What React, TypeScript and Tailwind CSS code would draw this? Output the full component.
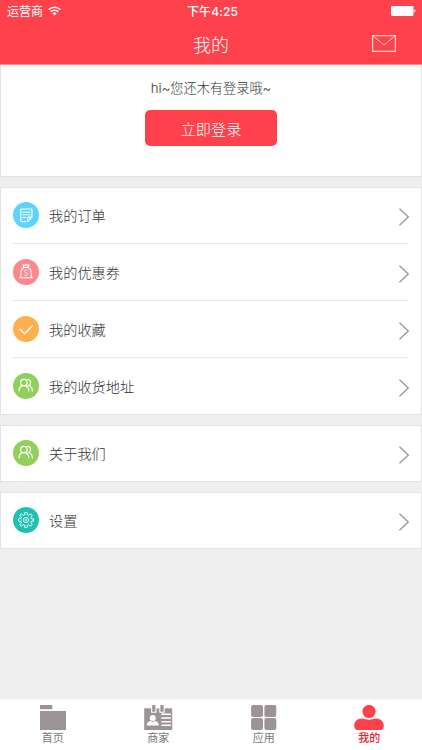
import type { ReactNode } from 'react';

interface MenuItem {
  label: string;
  color: string;
  icon: ReactNode;
}

interface TabItem {
  label: string;
  icon: ReactNode;
  active?: boolean;
}

function OrderIcon() {
  return (
    <svg className="h-[26px] w-[26px]" viewBox="0 0 26 26" fill="none" stroke="white" strokeWidth="1.2" strokeLinejoin="round" strokeLinecap="round">
      <path d="M12.800 19.600H9.400a1.600 1.600 0 0 1-1.600-1.600V8a1 1 0 0 1 1-1H18a1 1 0 0 1 1 1v7.200l-4.400 4.400v-3.400a1 1 0 0 1 1-1H19" />
      <path d="M10 10.200h6.800M10 12.800h6.800M10 15.400h2.600" strokeWidth="1" />
    </svg>
  );
}

function CouponIcon() {
  return (
    <svg className="h-[26px] w-[26px]" viewBox="0 0 26 26" fill="none" stroke="white" strokeWidth="1.1" strokeLinejoin="round" strokeLinecap="round">
      <path d="M10.800 8.400 10 5.700l1.800.5 1.200-.6 1.200.6 1.800-.5-.8 2.700z" />
      <path d="M10.800 8.400C8.700 9.500 8 11 8 13.200v3.600l-1.200 2h12.600l-1.300-2v-3.600c0-2.200-.8-3.700-2.900-4.800" />
      <path d="M14.700 11.900c-.3-.6-.9-.9-1.700-.9-1 0-1.700.5-1.700 1.300 0 2 3.500.8 3.500 2.800 0 .8-.8 1.400-1.800 1.400-.9 0-1.600-.4-1.900-1.100" strokeWidth=".8" />
    </svg>
  );
}

function CheckIcon() {
  return (
    <svg className="h-[26px] w-[26px]" viewBox="0 0 26 26" fill="none" stroke="white" strokeWidth="1.5">
      <path d="m6.600 12.800 5 4.900 8-8.300" />
    </svg>
  );
}

function PeopleIcon() {
  return (
    <svg className="h-[26px] w-[26px]" viewBox="0 0 26 26" fill="none" stroke="white" strokeWidth="1.2" strokeLinecap="round">
      <circle cx="10.9" cy="9.6" r="3.3" />
      <path d="M6 17.800c.2-2.900 1.500-4.600 3.300-5.200M12.600 12.600c1.900.7 3.100 2.400 3.200 5.200" />
      <path d="M14.200 6.500c1.900-.5 3.400 1 3.400 3 0 1.400-.7 2.400-1.700 3 2 .8 3.300 2.600 3.500 5.300" />
    </svg>
  );
}

function GearIcon() {
  return (
    <svg className="h-[26px] w-[26px]" viewBox="0 0 26 26" fill="none" stroke="white" strokeWidth="1" strokeLinejoin="round">
      <path d="M11.600 7.800 11.900 5.500h2.200l.3 2.300 1.300.5 1.900-1.400 1.500 1.500-1.400 1.900.5 1.300 2.300.3v2.200l-2.300.3-.5 1.300 1.400 1.900-1.500 1.500-1.900-1.400-1.300.5-.3 2.300h-2.200l-.3-2.300-1.300-.5-1.900 1.400-1.500-1.500 1.400-1.900-.5-1.300-2.300-.3v-2.200l2.300-.3.5-1.300-1.400-1.900 1.500-1.500 1.900 1.400z" />
      <circle cx="13" cy="13" r="2.700" strokeWidth=".8" />
      <circle cx="13" cy="13" r="1" strokeWidth=".7" />
    </svg>
  );
}

function HomeTabIcon() {
  return (
    <svg className="h-[26px] w-[30px]" viewBox="0 0 30 26" fill="currentColor">
      <path d="M2 0h12.300v4.300H2zM2 6h26v19H2z" />
    </svg>
  );
}

function ShopTabIcon() {
  return (
    <svg className="h-[26px] w-[30px]" viewBox="0 0 30 26">
      <path d="M1.200 3.300h28V25h-28z" fill="currentColor" />
      <path d="M8.100 0h5.400v7.800H8.100zM16.300 0h5.400v7.800h-5.400z" fill="white" />
      <path d="M9.200 0h3.200v6.800H9.200zM17.400 0h3.200v6.800h-3.200z" fill="currentColor" />
      <circle cx="9.800" cy="12.900" r="3" fill="white" />
      <path d="M3.800 20.500c0-3 1.700-4.300 4-4.500l2 .9 2-.9c2.400.2 4 1.500 4 4.500z" fill="white" />
      <path d="M18.300 9.300h9.700M18.300 13h9.700M18.300 16.700h9.700M18.300 20.300h9.700" stroke="white" strokeWidth="1.5" />
    </svg>
  );
}

function AppsTabIcon() {
  return (
    <svg className="h-[26px] w-[30px]" viewBox="0 0 30 26" fill="currentColor">
      <rect x="2.1" y="0" width="11.9" height="11.9" rx="2" />
      <rect x="15.4" y="0" width="11.9" height="11.9" rx="2" />
      <rect x="2.1" y="13.1" width="11.9" height="11.9" rx="2" />
      <rect x="15.4" y="13.1" width="11.9" height="11.9" rx="2" />
    </svg>
  );
}

function MineTabIcon() {
  return (
    <svg className="h-[26px] w-[30px]" viewBox="0 0 30 26" fill="currentColor">
      <circle cx="15" cy="6.500" r="6.600" />
      <path d="M3.500 25C1.500 25 .2 23.300.2 20.800c0-4.300 3.300-7.300 7.800-7.300 2.800 0 4.500 1.300 7 1.300s4.200-1.300 7-1.300c4.500 0 7.800 3 7.800 7.300 0 2.500-1.300 4.200-3.300 4.200z" />
    </svg>
  );
}

const menuGroups: MenuItem[][] = [
  [
    { label: '我的订单', color: 'bg-[#5fd3ff]', icon: <OrderIcon /> },
    { label: '我的优惠券', color: 'bg-[#fc888d]', icon: <CouponIcon /> },
    { label: '我的收藏', color: 'bg-[#ffaf4b]', icon: <CheckIcon /> },
    { label: '我的收货地址', color: 'bg-[#91d05b]', icon: <PeopleIcon /> },
  ],
  [{ label: '关于我们', color: 'bg-[#91d05b]', icon: <PeopleIcon /> }],
  [{ label: '设置', color: 'bg-[#1fc2b2]', icon: <GearIcon /> }],
];

const tabs: TabItem[] = [
  { label: '首页', icon: <HomeTabIcon /> },
  { label: '商家', icon: <ShopTabIcon /> },
  { label: '应用', icon: <AppsTabIcon /> },
  { label: '我的', icon: <MineTabIcon />, active: true },
];

function StatusBar() {
  return (
    <div className="grid h-[22px] grid-cols-3 items-center pr-[6px] pl-[7px] font-[Inter,'Noto_Sans_CJK_SC',sans-serif] text-[12px] leading-none">
      <div className="flex items-center gap-[5px]">
        <span className="pt-px">运营商</span>
        <svg className="mb-px h-[10px] w-[13px]" viewBox="0 0 13 10" fill="none" stroke="white" strokeWidth="1.5">
          <path d="M.7 3.600a8.300 8.300 0 0 1 11.600 0M2.700 5.700a5.400 5.400 0 0 1 7.600 0" />
          <path d="m6.500 9.500-2.100-2.200a3 3 0 0 1 4.200 0z" fill="white" stroke="none" />
        </svg>
      </div>
      <div className="pt-px pl-[2px] text-center font-medium tracking-[.1px]">下午4:25</div>
      <svg className="h-[10px] w-[25px] justify-self-end" viewBox="0 0 25 10" fill="white">
        <rect width="22.5" height="10" rx="1.2" />
        <path d="M23.300 3.300c1.500.3 1.500 3.100 0 3.400z" />
      </svg>
    </div>
  );
}

function MenuRow({ item, divided }: { item: MenuItem; divided: boolean }) {
  return (
    <li className={divided ? 'border-t border-[#e8e8e8]' : ''}>
      <button type="button" className={divided ? 'flex h-[56px] w-full items-center' : 'flex h-[55px] w-full items-center'}>
        <span className={`-ml-[.5px] mb-px flex h-[26px] w-[26px] items-center justify-center rounded-full ${item.color}`}>{item.icon}</span>
        <span className="mb-px ml-[10.5px] text-[14.2px] leading-5 font-light text-[#333]">{item.label}</span>
        <svg className="mt-[3px] ml-auto h-[18px] w-[10px]" viewBox="0 0 10 18" fill="none" stroke="#999" strokeWidth="1.4">
          <path d="m.5.700 8.800 8.300-8.800 8.300" />
        </svg>
      </button>
    </li>
  );
}

export default function App() {
  return (
    <div className="flex h-[750px] w-[422px] flex-col overflow-hidden bg-[#efefef] font-['Noto_Sans_CJK_SC',sans-serif]">
      <header className="h-[65px] shrink-0 border-b border-[#ff8b91] bg-[#ff414c] text-white">
        <StatusBar />
        <div className="grid h-[44px] grid-cols-3 items-center">
          <h1 className="col-start-2 text-center text-[18px] leading-6 font-light">我的</h1>
          <svg className="mr-[26px] mb-[1px] h-[17px] w-[24px] justify-self-end" viewBox="0 0 24 17" fill="none" stroke="#ffdcde">
            <path d="M.6.6h22.800v15.800H.6z" strokeWidth="1.2" />
            <path d="M.6.6 12 10 23.400.6" strokeWidth=".9" />
          </svg>
        </div>
      </header>

      <main className="flex flex-1 flex-col gap-[10px]">
        <section className="flex h-[112px] flex-col items-center border-x border-b border-[#e3e3e6] bg-white">
          <p className="mt-[13px] font-[Inter,'Noto_Sans_CJK_SC',sans-serif] text-[13.2px] leading-5 font-light text-[#333]">hi~您还木有登录哦~</p>
          <button type="button" className="mt-[12px] h-[36px] w-[132px] rounded-[5px] bg-[#ff414c] pb-px text-[15.2px] leading-5 font-light text-white">
            立即登录
          </button>
        </section>

        {menuGroups.map(group => (
          <section key={group[0].label} className="border border-[#e3e3e6] bg-white px-[12px]">
            <ul>
              {group.map((item, index) => (
                <MenuRow key={item.label} item={item} divided={index > 0} />
              ))}
            </ul>
          </section>
        ))}
      </main>

      <nav className="grid h-[51px] shrink-0 grid-cols-4 border-t border-[#f5f5f5] bg-white">
        {tabs.map(tab => (
          <button
            key={tab.label}
            type="button"
            className={`flex flex-col items-center pt-[5px] ${tab.active ? 'text-[#ff414c]' : 'text-[#9c9494]'}`}
          >
            {tab.icon}
            <span className={tab.active ? 'text-[11px] leading-[12px] font-medium text-[#ee1c28]' : 'text-[11px] leading-[12px] text-[#777]'}>{tab.label}</span>
          </button>
        ))}
      </nav>
    </div>
  );
}
